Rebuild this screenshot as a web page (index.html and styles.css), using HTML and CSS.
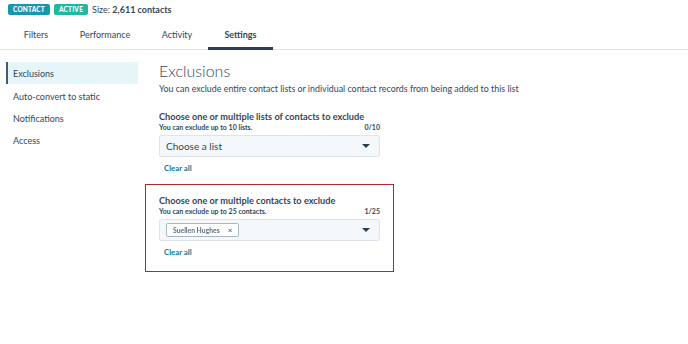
FILE: index.html
```html
<!DOCTYPE html>
<html>
<head>
<meta charset="utf-8">
<link rel="stylesheet" href="styles.css">
</head>
<body>
<div class="page">
  <header class="header">
    <div class="meta">
      <span class="badge badge-contact">CONTACT</span>
      <span class="badge badge-active">ACTIVE</span>
      <span class="size">Size: <b>2,611 contacts</b></span>
    </div>
    <nav class="tabs">
      <span class="tab">Filters</span>
      <span class="tab">Performance</span>
      <span class="tab">Activity</span>
      <span class="tab tab-active">Settings</span>
    </nav>
  </header>
  <div class="body">
    <aside class="sidebar">
      <div class="side-item side-active">Exclusions</div>
      <div class="side-item">Auto-convert to static</div>
      <div class="side-item">Notifications</div>
      <div class="side-item">Access</div>
    </aside>
    <main class="main">
      <h1 class="title">Exclusions</h1>
      <p class="desc">You can exclude entire contact lists or individual contact records from being added to this list</p>

      <section class="field field-lists">
        <div class="label">Choose one or multiple lists of contacts to exclude</div>
        <div class="subrow"><span>You can exclude up to 10 lists.</span><span>0/10</span></div>
        <div class="select">
          <span class="placeholder">Choose a list</span>
          <span class="caret"></span>
        </div>
        <a class="clear">Clear all</a>
      </section>

      <section class="highlight">
        <div class="field">
          <div class="label">Choose one or multiple contacts to exclude</div>
          <div class="subrow"><span>You can exclude up to 25 contacts.</span><span>1/25</span></div>
          <div class="select">
            <span class="tag"><span class="tag-name">Suellen Hughes</span><span class="tag-x">×</span></span>
            <span class="caret"></span>
          </div>
          <a class="clear">Clear all</a>
        </div>
      </section>
    </main>
  </div>
</div>
</body>
</html>
```

FILE: styles.css
```css
* { box-sizing: border-box; }
html, body { margin: 0; padding: 0; background: #fff; }
body {
  font-family: "Lato", "Open Sans", sans-serif;
  color: #33475b;
  width: 688px;
  height: 344px;
  overflow: hidden;
}
.header {
  border-bottom: 1px solid #dfe3eb;
}
.meta {
  display: flex;
  align-items: center;
  gap: 4px;
  padding: 4px 0 0 8px;
  height: 15px;
}
.badge {
  display: inline-flex;
  align-items: center;
  height: 11px;
  padding: 0 5px;
  border-radius: 2px;
  font-size: 6.5px;
  font-weight: 900;
  color: #fff;
  letter-spacing: 0.2px;
}
.badge-contact { background: #1896af; }
.badge-active { background: #1fb8a0; }
.size {
  font-size: 9px;
}
.size b { font-weight: 700; }
.tabs {
  display: flex;
  padding-left: 8px;
  margin-top: 5px;
}
.tab {
  font-size: 9px;
  line-height: 12px;
  padding: 9px 0 6px;
  text-align: center;
  border-bottom: 3px solid transparent;
  margin-bottom: -1px;
}
.tab:nth-child(1) { width: 56px; }
.tab:nth-child(2) { width: 82px; }
.tab:nth-child(3) { width: 62px; }
.tab:nth-child(4) { width: 65px; }
.tab-active {
  font-weight: 700;
  border-bottom-color: #2d3e50;
}
.body {
  display: flex;
  padding-top: 12px;
}
.sidebar {
  width: 138px;
  padding-left: 6px;
}
.side-item {
  height: 22px;
  display: flex;
  align-items: center;
  padding-left: 7px;
  font-size: 9px;
}
.side-active {
  background: #e5f5f8;
  border-left: 2px solid #425b76;
  padding-left: 5px;
  margin-bottom: 1px;
}
.main {
  padding-left: 21px;
  width: 236px;
  flex: none;
  box-sizing: content-box;
  font-size: 9px;
}
.title {
  margin: 0;
  font-size: 16px;
  font-weight: 300;
  line-height: 18px;
}
.desc {
  margin: 3px 0 0;
  font-size: 8.9px;
  line-height: 12px;
  white-space: nowrap;
}
.field { width: 221px; }
.field-lists { margin-top: 16px; }
.label {
  font-size: 9.2px;
  font-weight: 700;
  line-height: 11px;
}
.subrow {
  display: flex;
  justify-content: space-between;
  font-size: 7px;
  font-weight: 700;
  line-height: 10px;
}
.select {
  margin-top: 3px;
  height: 22px;
  background: #f5f8fa;
  border: 1px solid #dfe3eb;
  border-radius: 2px;
  display: flex;
  align-items: center;
  justify-content: space-between;
  padding: 0 9px 0 6px;
}
.placeholder { font-size: 10px; }
.caret {
  width: 0; height: 0;
  border-left: 4px solid transparent;
  border-right: 4px solid transparent;
  border-top: 4px solid #2d3e50;
}
.clear {
  display: block;
  width: max-content;
  margin: 6px 0 0 5px;
  font-size: 7.8px;
  font-weight: 700;
  color: #0a7c96;
  line-height: 10px;
}
.highlight {
  margin: 11px 0 0 -14px;
  width: 249px;
  height: 88px;
  border: 1px solid #b5262c;
  padding: 10px 0 0 13px;
}
.tag {
  display: inline-flex;
  align-items: center;
  gap: 8px;
  height: 14px;
  padding: 0 6px;
  background: #ffffff;
  border: 1px solid #a8b7c7;
  border-radius: 2px;
  font-size: 6.8px;
  font-weight: 700;
}
.tag-name { filter: blur(0.7px); color: #5d6f82; }
.tag-x { font-size: 8px; font-weight: 400; }
```
